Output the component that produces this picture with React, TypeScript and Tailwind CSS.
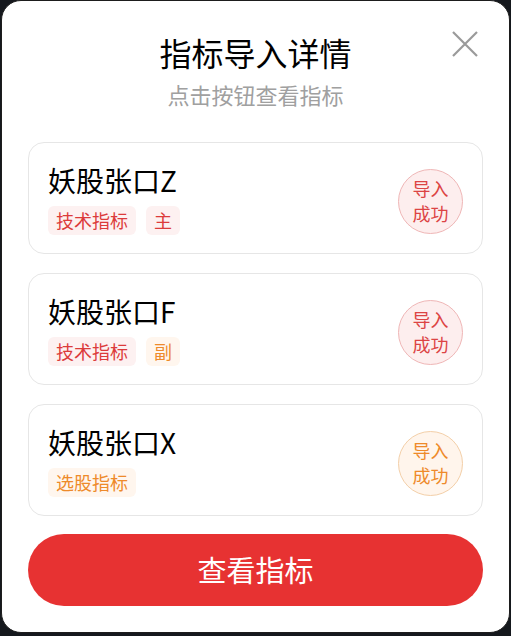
import React from "react";

type Item = {
  name: string;
  tags: { label: string; tone: "red" | "orange" }[];
  tone: "red" | "orange";
};

const items: Item[] = [
  {
    name: "妖股张口Z",
    tags: [
      { label: "技术指标", tone: "red" },
      { label: "主", tone: "red" },
    ],
    tone: "red",
  },
  {
    name: "妖股张口F",
    tags: [
      { label: "技术指标", tone: "red" },
      { label: "副", tone: "orange" },
    ],
    tone: "red",
  },
  {
    name: "妖股张口X",
    tags: [{ label: "选股指标", tone: "orange" }],
    tone: "orange",
  },
];

const tagClass = {
  red: "bg-[#fdf1f1] text-[#dc3b3b]",
  orange: "bg-[#fff6ee] text-[#ee8a2a]",
};

const badgeClass = {
  red: "bg-[#fdeeee] border-[#efb6b6] text-[#dc4444]",
  orange: "bg-[#fff5ec] border-[#f3cfa8] text-[#ee8a2a]",
};

const App = () => {
  return (
    <div
      className="h-[636px] w-[511px] bg-[#15181d] overflow-hidden"
      style={{ fontFamily: '"Noto Sans CJK SC", "Noto Sans", sans-serif' }}
    >
      <div className="ml-[1px] h-[633px] w-[509px] rounded-[20px] border border-[#1d1d1d] bg-white px-[26px] pt-[28px] relative">
        {/* Close */}
        <button className="absolute right-[30px] top-[29px] h-[28px] w-[28px]">
          <svg viewBox="0 0 28 28" className="h-[28px] w-[28px]">
            <path
              d="M2 2 L26 26 M26 2 L2 26"
              stroke="#9a9a9a"
              strokeWidth="2.2"
              fill="none"
            />
          </svg>
        </button>

        {/* Header */}
        <div className="flex flex-col items-center">
          <h2 className="text-[32px] leading-[46px] font-normal text-black">
            指标导入详情
          </h2>
          <p className="mt-[4px] text-[22px] leading-[30px] text-[#a0a0a0]">
            点击按钮查看指标
          </p>
        </div>

        {/* Cards */}
        <div className="mt-[33px] flex flex-col gap-[19px]">
          {items.map((item) => (
            <div
              key={item.name}
              className="flex h-[112px] items-center justify-between rounded-[16px] border border-[#e6e6e6] pl-[19px] pr-[19px]"
            >
              <div className="flex flex-col">
                <div className="text-[28px] leading-[38px] text-black">
                  {item.name}
                </div>
                <div className="mt-[7px] flex gap-[10px]">
                  {item.tags.map((tag) => (
                    <span
                      key={tag.label}
                      className={`flex h-[29px] items-center rounded-[6px] px-[8px] text-[18px] ${tagClass[tag.tone]}`}
                    >
                      {tag.label}
                    </span>
                  ))}
                </div>
              </div>
              <div
                className={`mt-[6px] flex h-[65px] w-[65px] flex-col items-center justify-center rounded-full border text-[18px] leading-[25px] ${badgeClass[item.tone]}`}
              >
                <span>导入</span>
                <span>成功</span>
              </div>
            </div>
          ))}
        </div>

        {/* Button */}
        <button className="mt-[18px] flex h-[72px] w-full items-center justify-center rounded-full bg-[#e73232] text-[29px] text-white">
          查看指标
        </button>
      </div>
    </div>
  );
};

export default App;
